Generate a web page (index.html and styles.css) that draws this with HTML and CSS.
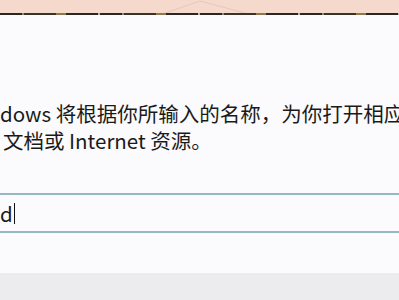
FILE: index.html
```html
<!DOCTYPE html>
<html lang="zh-CN">
<head>
<meta charset="UTF-8">
<meta name="viewport" content="width=device-width, initial-scale=1.0">
<link rel="stylesheet" href="styles.css">
<title>运行</title>
</head>
<body>
<div class="window">
    <div class="titlebar">
        <svg class="glare" width="399" height="13" viewBox="0 0 399 13">
            <polyline points="165,13 200,1 245,13" fill="none" stroke="#e9c6b8" stroke-width="1"/>
        </svg>
    </div>
    <div class="edge"></div>
    <div class="content">
        <div class="desc">
            <p class="line">dows 将根据你所输入的名称，为你打开相应</p>
            <p class="line second">文档或 Internet 资源。</p>
        </div>
        <div class="field">
            <span class="value">d</span><span class="caret"></span>
        </div>
    </div>
    <div class="footer"></div>
</div>
</body>
</html>
```

FILE: styles.css
```css
body {
    margin: 0;
    width: 399px;
    height: 300px;
    overflow: hidden;
    font-family: "Noto Sans CJK SC", "Noto Sans", sans-serif;
    color: #1a1a1a;
    background: #fbfafc;
}

.window {
    display: flex;
    flex-direction: column;
    height: 300px;
}

.titlebar {
    height: 13px;
    background: #f6d9cd;
    position: relative;
}

.glare {
    position: absolute;
    left: 0;
    top: 0;
}

.edge {
    height: 2px;
    background: repeating-linear-gradient(to right, #2a2622 0 22px, #8a8680 22px 24px, #3a332a 24px 56px, #8c7a4c 56px 66px, #2b2724 66px 98px, #b8b4b0 98px 100px);
}

.content {
    flex: 1;
    background: #fbfafc;
    padding-top: 85px;
}

.desc {
    font-size: 20.5px;
    line-height: 27px;
}

.line {
    margin: 0;
    white-space: nowrap;
}

.second {
    padding-left: 3px;
}

.field {
    margin-top: 39px;
    height: 36px;
    border-top: 2px solid #95b8c2;
    border-bottom: 2px solid #95b8c2;
    display: flex;
    align-items: center;
    font-size: 20.5px;
}

.caret {
    width: 1px;
    height: 21px;
    background: #111;
    margin-left: 1px;
}

.footer {
    height: 27px;
    background: #ecebee;
}
```
